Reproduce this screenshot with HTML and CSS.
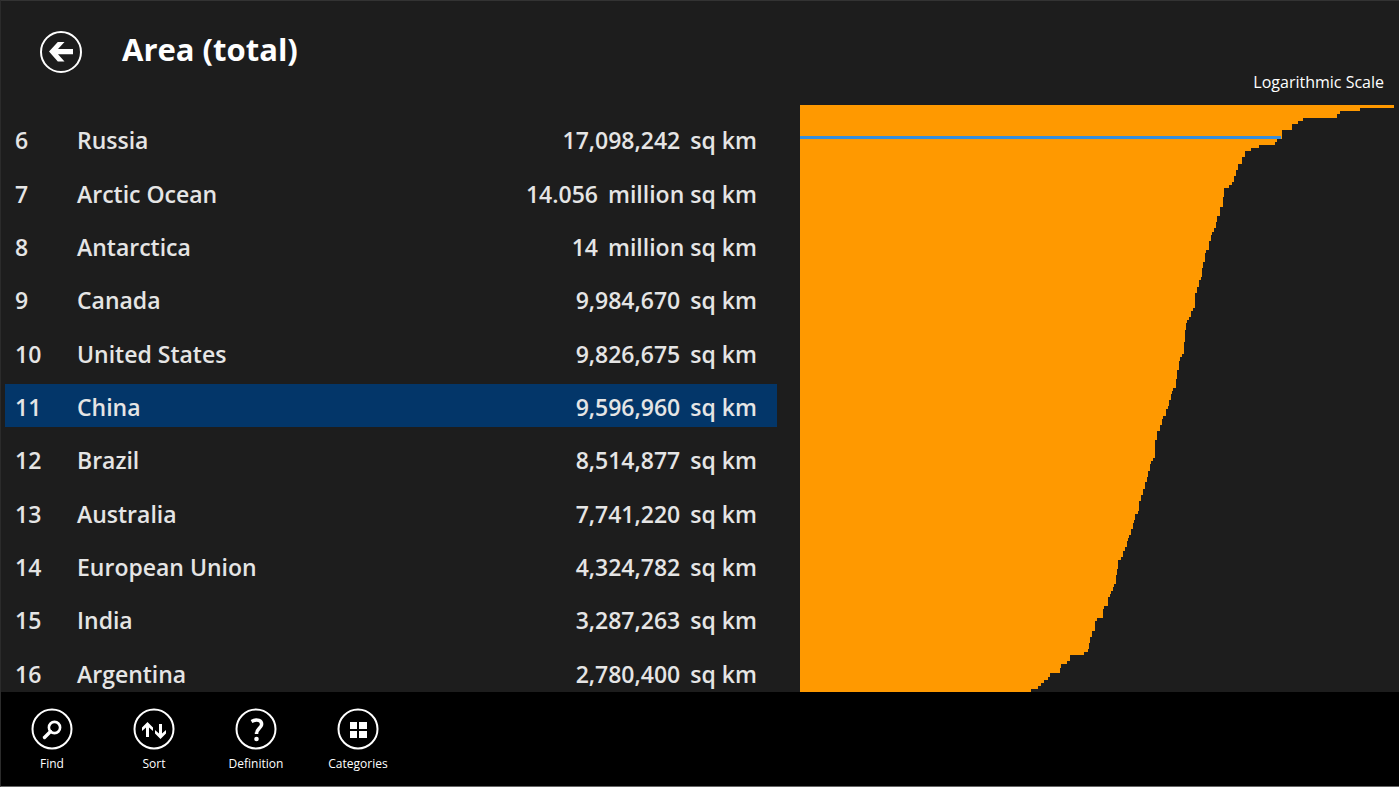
FILE: index.html
```html
<!DOCTYPE html>
<html lang="en">
<head>
  <meta charset="UTF-8">
  <meta name="viewport" content="width=device-width, initial-scale=1.0">
  <title>Area (total)</title>
  <link rel="stylesheet" href="styles.css">
</head>
<body>
  <header class="header">
    <button class="back" type="button" aria-label="Back">
      <svg viewBox="0 0 42 42" width="42" height="42">
        <circle cx="21" cy="21" r="20" fill="none" stroke="#fff" stroke-width="2"/>
        <path d="M9 20.5 L17.8 11 H24.5 L18 18 H33 V23.2 H18 L24.5 30.5 H17.8 Z" fill="#fff"/>
      </svg>
    </button>
    <h1 class="title">Area (total)</h1>
    <span class="scale">Logarithmic Scale</span>
  </header>

  <main class="main">
    <div class="list">
      <table class="countries">
        <tbody>
          <tr><td class="rank">6</td><td>Russia</td><td class="value">17,098,242<span class="unit">sq km</span></td></tr>
          <tr><td class="rank">7</td><td>Arctic Ocean</td><td class="value">14.056<span class="unit">million sq km</span></td></tr>
          <tr><td class="rank">8</td><td>Antarctica</td><td class="value">14<span class="unit">million sq km</span></td></tr>
          <tr><td class="rank">9</td><td>Canada</td><td class="value">9,984,670<span class="unit">sq km</span></td></tr>
          <tr><td class="rank">10</td><td>United States</td><td class="value">9,826,675<span class="unit">sq km</span></td></tr>
          <tr class="selected"><td class="rank">11</td><td>China</td><td class="value">9,596,960<span class="unit">sq km</span></td></tr>
          <tr><td class="rank">12</td><td>Brazil</td><td class="value">8,514,877<span class="unit">sq km</span></td></tr>
          <tr><td class="rank">13</td><td>Australia</td><td class="value">7,741,220<span class="unit">sq km</span></td></tr>
          <tr><td class="rank">14</td><td>European Union</td><td class="value">4,324,782<span class="unit">sq km</span></td></tr>
          <tr><td class="rank">15</td><td>India</td><td class="value">3,287,263<span class="unit">sq km</span></td></tr>
          <tr><td class="rank">16</td><td>Argentina</td><td class="value">2,780,400<span class="unit">sq km</span></td></tr>
        </tbody>
      </table>
    </div>

    <div class="chart">
      <svg viewBox="800 105 594 587" preserveAspectRatio="none" shape-rendering="crispEdges" role="img" aria-label="Area by rank">
        <path fill="#ff9900" d="M800 105 H1394 V108 H1360 V111 H1340 V114 H1337 V118 H1303 V121 H1298 V124 H1292 V130 H1282 V139
          H1277 V142 H1275 V145 H1259 V148 H1251 V151 H1245 V157 H1242 V164 H1238 V170 H1236 V176 H1234 V182 H1232 V185 H1229 V188 H1224 V197
          H1223 V207 H1220 V216 H1217 V222 H1216 V228 H1214 V232 H1212 V235 H1211 V241 H1209 V250 H1206 V253 H1205 V262 H1203 V268 H1202 V277
          H1201 V280 H1199 V287 H1197 V293 H1195 V308 H1193 V311 H1191 V317 H1189 V320 H1187 V323 H1186 V330 H1185 V342 H1184 V354
          H1182 V357 H1180 V361 H1179 V370 H1177 V379 H1176 V388 H1173 V391 H1172 V394 H1171 V400 H1169 V406 H1168 V409 H1166 V416 H1163 V419
          H1162 V425 H1160 V431 H1157 V440 H1155 V458 H1153 V461 H1151 V464 H1150 V471 H1148 V477 H1147 V482 H1145 V489 H1143 V495 H1141 V501
          H1139 V511 H1138 V514 H1135 V520 H1134 V523 H1133 V529 H1131 V535 H1129 V538 H1128 V541 H1127 V547 H1125 V551 H1123 V557
          H1121 V560 H1118 V569 H1117 V575 H1116 V584 H1114 V587 H1113 V591 H1111 V594 H1110 V597 H1108 V606 H1104 V609 H1103 V618
          H1097 V621 H1095 V631 H1092 V637 H1090 V643 H1089 V649 H1088 V652 H1084 V655 H1070 V661 H1067 V664 H1061 V668 H1060 V673
          H1050 V677 H1048 V680 H1044 V683 H1041 V686 H1038 V689 H1031 V692 H800 Z"/>
        <path fill="#3a8fdc" d="M800 136 H1281 V139 H800 Z"/>
      </svg>
    </div>
  </main>

  <footer class="appbar">
    <button class="command" type="button">
      <svg viewBox="0 0 42 42" width="42" height="42" fill="none" stroke="#fff">
        <circle cx="21" cy="21" r="19.5" stroke-width="2"/>
        <circle cx="23.5" cy="19.5" r="5.6" stroke-width="2.6"/>
        <path d="M19.5 23.5 L13.5 29.5" stroke-width="3.4" stroke-linecap="round"/>
      </svg>
      <span>Find</span>
    </button>
    <button class="command" type="button">
      <svg viewBox="0 0 42 42" width="42" height="42">
        <circle cx="21" cy="21" r="19.5" fill="none" stroke="#fff" stroke-width="2"/>
        <path fill="#fff" d="M14.5 14 L20 19.5 V23 L16 19.5 V29 H13 V19.5 L9 23 V19.5 Z M27.5 31 L33 25.5 V22 L29 25.5 V16 H26 V25.5 L22 22 V25.5 Z"/>
      </svg>
      <span>Sort</span>
    </button>
    <button class="command" type="button">
      <svg viewBox="0 0 42 42" width="42" height="42" fill="none" stroke="#fff">
        <circle cx="21" cy="21" r="19.5" stroke-width="2"/>
        <path d="M16.5 13.5 C22 10.5 27.3 12.5 26.5 17 C25.8 20.5 21.5 20.8 21.5 26" stroke-width="3.5"/>
        <circle cx="21.5" cy="31" r="2.3" fill="#fff" stroke="none"/>
      </svg>
      <span>Definition</span>
    </button>
    <button class="command" type="button">
      <svg viewBox="0 0 42 42" width="42" height="42">
        <circle cx="21" cy="21" r="19.5" fill="none" stroke="#fff" stroke-width="2"/>
        <path d="M13 14 H20 V21 H13 Z M22 14 H30 V21 H22 Z M13 23 H20 V30 H13 Z M22 23 H30 V30 H22 Z" fill="#fff"/>
      </svg>
      <span>Categories</span>
    </button>
  </footer>
</body>
</html>
```
FILE: styles.css
```css
* {
    box-sizing: border-box;
}
body {
    display: flex;
    flex-direction: column;
    height: 100vh;
    margin: 0;
    overflow: hidden;
    border-top: 1px solid #333;
    border-left: 1px solid #2b2b2b;
    border-bottom: 1px solid #666;
    background-color: #1d1d1d;
    color: white;
    font-family: "Open Sans", "Noto Sans", sans-serif;
}
button {
    padding: 0;
    border: 0;
    background: none;
    color: inherit;
    font-family: inherit;
    cursor: pointer;
}
svg {
    display: block;
}
.header {
    display: flex;
    align-items: flex-start;
    height: 104px;
    padding: 28px 15px 0 39px;
}
.back {
    margin-top: 2px;
}
.title {
    margin: 0 0 0 40px;
    font-size: 31px;
    line-height: 40px;
    font-weight: 700;
}
.scale {
    align-self: flex-end;
    margin-left: auto;
    padding-bottom: 13px;
    font-size: 16px;
    line-height: 20px;
}
.main {
    display: grid;
    grid-template-columns: 4fr 3fr;
    flex: 1;
    min-height: 0;
}
.list {
    min-height: 0;
    padding: 2px 23px 0 4px;
    overflow: hidden;
}
.countries {
    width: 100%;
    height: calc(100% + 12px);
    border-spacing: 0 10px;
    color: #e5e5e5;
    font-size: 23px;
    line-height: 32px;
    font-weight: 600;
}
.countries td {
    padding: 3px 0 0;
}
.countries .rank {
    width: 72px;
    padding-left: 10px;
}
.countries .value {
    padding-right: 20px;
    text-align: right;
}
.unit {
    margin-left: 10px;
}
.selected {
    background-color: #033669;
}
.chart {
    min-height: 0;
    padding-right: 5px;
}
.chart svg {
    width: 100%;
    height: 100%;
}
.appbar {
    display: flex;
    height: 94px;
    padding-top: 16px;
    background-color: black;
}
.command {
    display: flex;
    flex-direction: column;
    align-items: center;
    width: 102px;
    font-size: 12px;
    line-height: 16px;
}
.command span {
    margin-top: 6px;
}
```
